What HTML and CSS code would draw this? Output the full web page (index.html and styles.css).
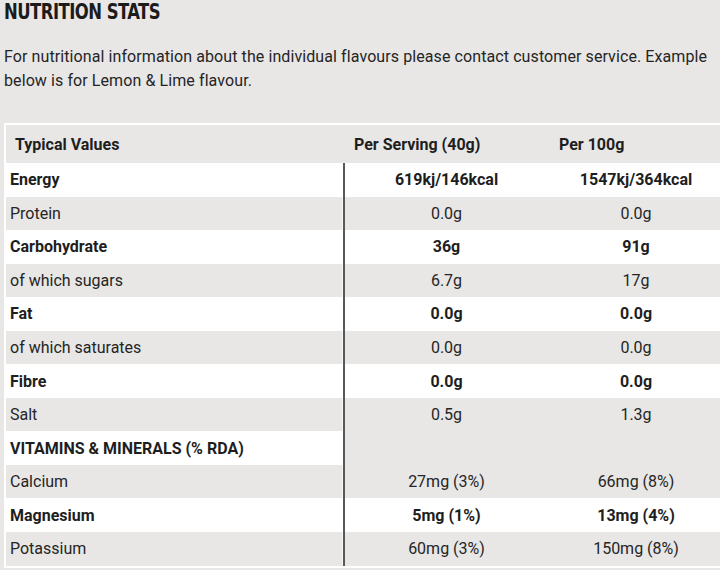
FILE: index.html
```html
<!DOCTYPE html>
<html lang="en">
<head>
<meta charset="utf-8">
<title>Nutrition Stats</title>
<link rel="stylesheet" href="styles.css">
</head>
<body>
<div class="page">
  <h2 class="title">NUTRITION STATS</h2>
  <p class="intro">For nutritional information about the individual flavours please contact customer service. Example below is for Lemon &amp; Lime flavour.</p>
  <table class="nutri">
    <colgroup>
      <col class="c1">
      <col class="c2">
      <col class="c3">
    </colgroup>
    <thead>
      <tr>
        <th>Typical Values</th>
        <th>Per Serving (40g)</th>
        <th>Per 100g</th>
      </tr>
    </thead>
    <tbody>
      <tr class="w b"><td>Energy</td><td>619kj/146kcal</td><td>1547kj/364kcal</td></tr>
      <tr class="g"><td>Protein</td><td>0.0g</td><td>0.0g</td></tr>
      <tr class="w b"><td>Carbohydrate</td><td>36g</td><td>91g</td></tr>
      <tr class="g"><td>of which sugars</td><td>6.7g</td><td>17g</td></tr>
      <tr class="w b"><td>Fat</td><td>0.0g</td><td>0.0g</td></tr>
      <tr class="g"><td>of which saturates</td><td>0.0g</td><td>0.0g</td></tr>
      <tr class="w b"><td>Fibre</td><td>0.0g</td><td>0.0g</td></tr>
      <tr class="g"><td>Salt</td><td>0.5g</td><td>1.3g</td></tr>
      <tr class="w b vit"><td>VITAMINS &amp; MINERALS (% RDA)</td><td class="empty"></td><td class="empty"></td></tr>
      <tr class="g"><td>Calcium</td><td>27mg (3%)</td><td>66mg (8%)</td></tr>
      <tr class="w b"><td>Magnesium</td><td>5mg (1%)</td><td>13mg (4%)</td></tr>
      <tr class="g"><td>Potassium</td><td>60mg (3%)</td><td>150mg (8%)</td></tr>
    </tbody>
  </table>
</div>
</body>
</html>
```

FILE: styles.css
```css
html, body {
  margin: 0;
  padding: 0;
  background: #e8e7e5;
  overflow: hidden;
}

.page {
  width: 720px;
  height: 570px;
  padding: 0 0 0 4px;
  box-sizing: border-box;
  font-family: Roboto, "Liberation Sans", sans-serif;
  color: #252525;
  overflow: hidden;
}

.title {
  display: inline-block;
  margin: 0;
  font-family: "Liberation Sans Narrow", "DejaVu Sans Condensed", "Liberation Sans", sans-serif;
  font-stretch: condensed;
  font-weight: 700;
  font-size: 21px;
  line-height: 24px;
  letter-spacing: -0.6px;
  color: #1b1b1b;
  transform: scaleX(0.87);
  transform-origin: left center;
}

.intro {
  margin: 21px 0 0 0;
  font-size: 16px;
  line-height: 24px;
  letter-spacing: 0.09px;
  width: 714px;
}

.nutri {
  margin-top: 30px;
  border-collapse: separate;
  border-spacing: 0;
  border: 2px solid #ffffff;
  border-right: 0;
  table-layout: fixed;
  width: 720px;
  font-size: 16px;
}

.c1 { width: 337px; }
.c2 { width: 205px; }
.c3 { width: 176px; }

.nutri th {
  height: 38px;
  padding: 0 0 0 9px;
  text-align: left;
  font-weight: 700;
  background: #e8e7e5;
  color: #1e1e1e;
}

.nutri th:nth-child(2) { padding-left: 11px; }
.nutri th:nth-child(3) { padding-left: 11px; }

.nutri td {
  height: 33.55px;
  padding: 0 4px;
  box-sizing: border-box;
  text-align: center;
  white-space: nowrap;
}

.nutri td:first-child {
  text-align: left;
  border-right: 1px solid rgba(255, 255, 255, 0.6);
}

.nutri td:nth-child(2) {
  border-left: 2px solid #585858;
}

.w td { background: #ffffff; }
.g td { background: #e8e7e5; }
.vit td.empty { background: #e8e7e5; }

.b td {
  font-weight: 700;
  color: #1e1e1e;
}
```
